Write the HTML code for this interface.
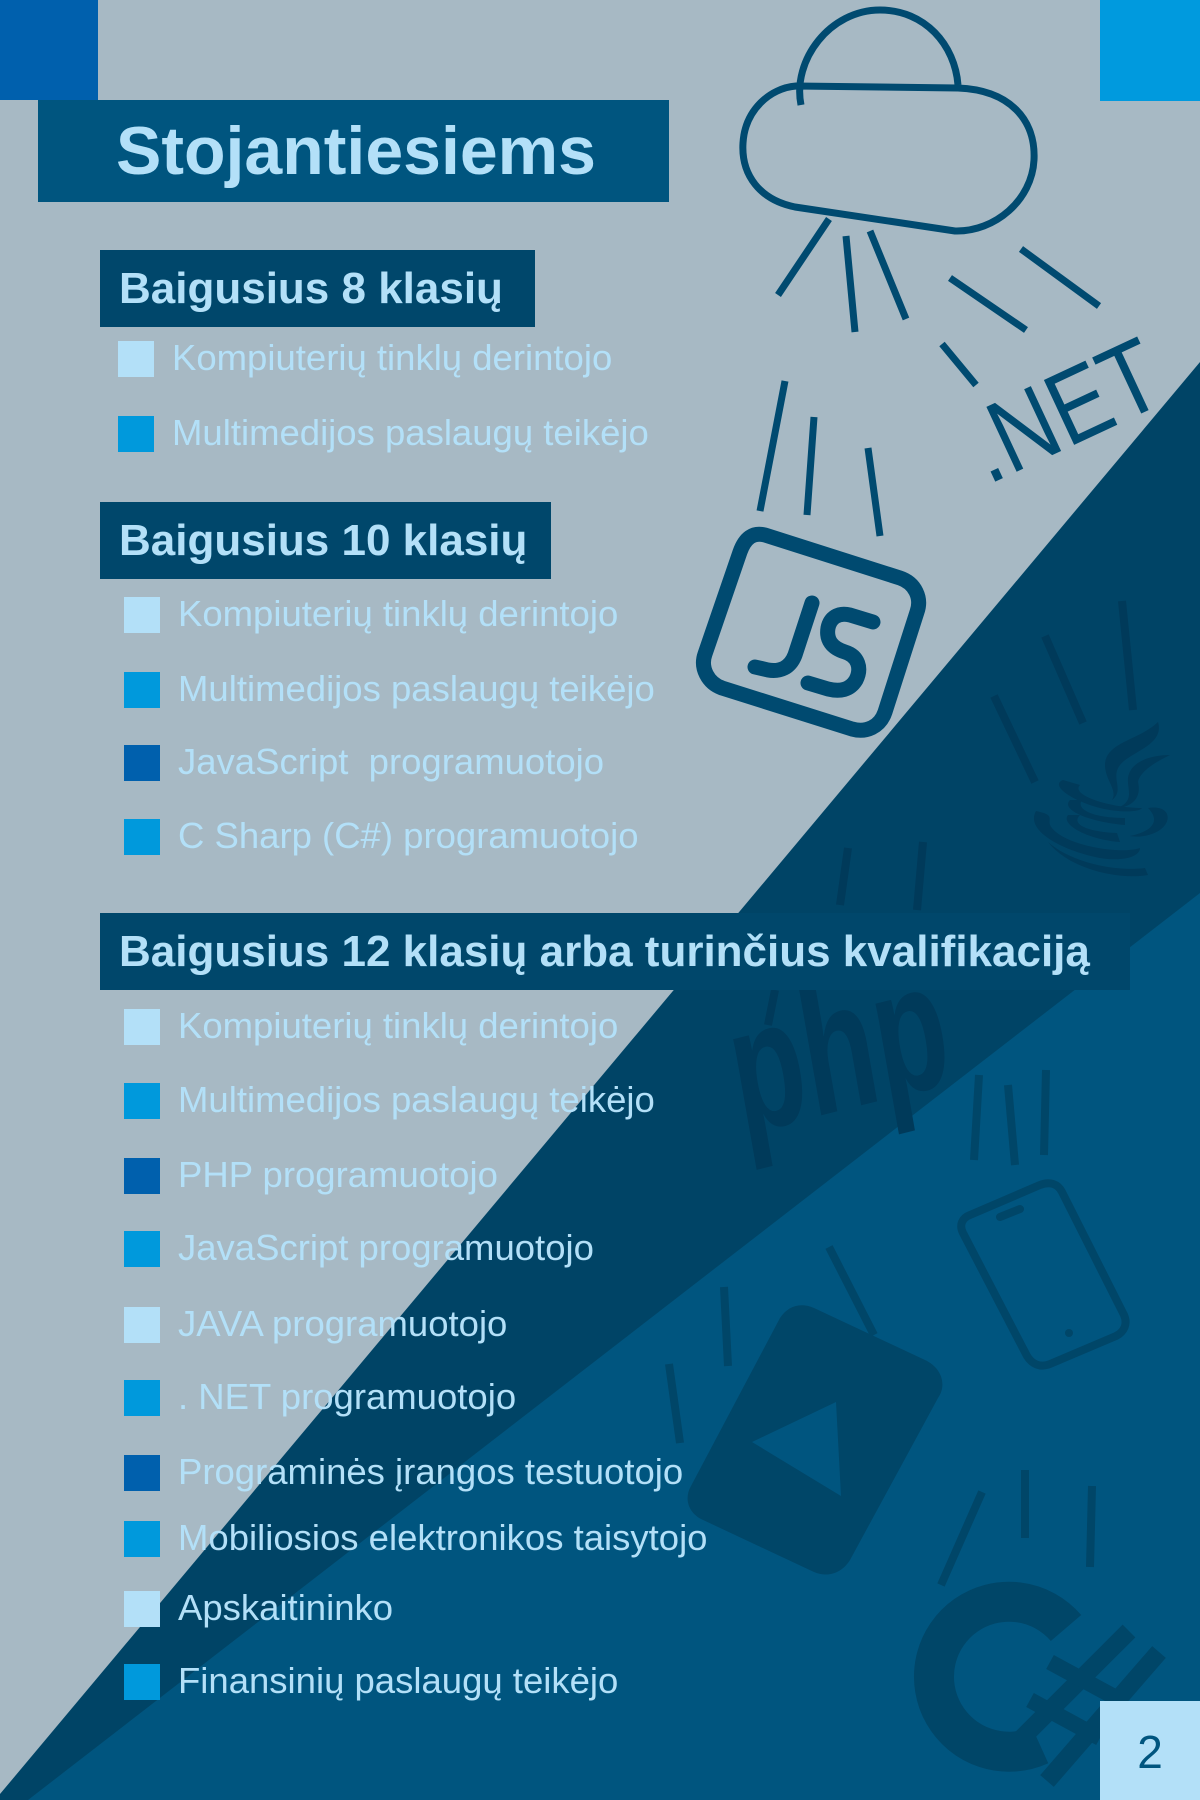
<!DOCTYPE html>
<html><head><meta charset="utf-8"><style>
*{margin:0;padding:0;box-sizing:border-box}
body{width:1200px;height:1800px;position:relative;overflow:hidden;background:#a7b9c4;font-family:"Liberation Sans",sans-serif}
.abs{position:absolute}
.title{left:38px;top:100px;width:631px;height:102px;background:#00557f;color:#b3e0f8;font-weight:bold;font-size:68px;line-height:102px;padding-left:78px}
.hdr{position:absolute;left:100px;height:77px;background:#00476b;color:#b3e0f8;font-weight:bold;font-size:44px;line-height:77px;padding-left:19px;white-space:nowrap}
.it{position:absolute;height:36px;color:#b3e0f8;font-size:36.5px;line-height:36px;white-space:nowrap}
.it i{position:absolute;left:0;top:0;width:36px;height:36px}
.it span{position:absolute;left:54px;top:-1px}
.a{background:#b3e0f8}.b{background:#0099dc}.c{background:#0060ad}
</style></head><body>
<svg class="abs" style="left:0;top:0" width="1200" height="1800" viewBox="0 0 1200 1800">
<polygon points="1200,362 1200,1800 -5,1800" fill="#004466"/>
<polygon points="1200,893 1200,1800 28,1800" fill="#00557f"/>
<rect x="0" y="0" width="98" height="100" fill="#0060ad"/>
<rect x="1100" y="0" width="100" height="101" fill="#009ade"/>
<g fill="none" stroke="#004a70" stroke-width="7" stroke-linecap="butt" stroke-linejoin="round">
<path d="M801,105 C792,60 830,10 880,10 C925,10 955,45 958,85"/>
<path d="M796,86 L958,88 C1010,90 1036,120 1034,160 C1032,200 995,232 955,231 L795,207 C760,200 741,175 743,143 C745,110 770,88 796,86 Z"/>
<path d="M829,219 L778,295 M846,236 L855,332 M870,231 L906,319 M950,278 L1026,330 M1021,249 L1099,306 M942,344 L976,385 M785,381 L760,511 M814,417 L807,515 M868,448 L880,536"/>
<path d="M765,535 L900,578 C915,583 922,598 917,612 L885,712 C880,727 866,733 852,729 L722,688 C708,683 700,668 705,654 L740,552 C745,538 753,532 765,535 Z" stroke-width="15"/>
<path d="M812,603 L795,655 C790,668 780,672 768,670 L755,667" stroke-width="15" stroke-linecap="round"/>
<path d="M873,622 L850,615 C838,612 830,618 828,628 C826,640 832,648 845,652 C858,656 862,668 856,680 C850,690 840,692 828,689 L808,683" stroke-width="15" stroke-linecap="round"/>
</g>
<text x="0" y="0" transform="translate(988,485) rotate(-25)" font-family="Liberation Sans" font-size="104" fill="#004a70" textLength="200" lengthAdjust="spacingAndGlyphs">.NET</text>
<g stroke="#003a5a" stroke-width="8" fill="none">
<path d="M994,696 L1035,782 M1045,636 L1083,723 M1122,601 L1133,710"/>
<path d="M848,848 L840,905 M923,842 L917,910"/>
<path d="M775,990 L768,1025"/>
</g>
<g fill="#003a5a">
<path d="M1158,722 C1140,740 1105,742 1105,765 C1105,780 1118,790 1112,800 C1125,790 1110,778 1120,765 C1130,752 1165,745 1158,722 Z"/>
<path d="M1170,755 C1150,755 1130,762 1128,778 C1127,790 1135,800 1118,808 C1140,805 1140,790 1138,782 C1140,770 1160,760 1170,755 Z"/>
<path d="M1063,780 C1050,785 1070,800 1100,808 C1120,813 1140,812 1142,808 C1110,808 1070,795 1080,785 Z"/>
<path d="M1070,800 C1060,810 1090,822 1125,825 L1125,818 C1095,818 1075,810 1082,800 Z"/>
<path d="M1068,815 C1060,825 1090,840 1120,842 L1117,833 C1090,832 1070,825 1080,815 Z"/>
<path d="M1148,808 C1165,805 1172,815 1165,825 C1158,835 1140,838 1130,836 C1150,832 1162,822 1148,808 Z"/>
<path d="M1036,811 C1025,830 1060,850 1100,858 C1125,862 1140,856 1140,848 C1120,855 1060,845 1050,825 C1048,818 1055,815 1036,811 Z"/>
<path d="M1048,842 C1070,870 1120,880 1148,875 L1145,868 C1115,872 1070,862 1048,842 Z"/>
</g>
<text x="0" y="0" transform="translate(742,1135) rotate(-14) skewX(-4)" font-family="Liberation Sans" font-weight="bold" font-size="180" fill="#003a5a" textLength="220" lengthAdjust="spacingAndGlyphs">php</text>
<g stroke="#004668" stroke-width="8" fill="none" stroke-linecap="butt">
<path d="M979,1075 L974,1160 M1008,1085 L1015,1165 M1046,1070 L1044,1155"/>
<path d="M970,1215 L1040,1185 C1050,1181 1058,1184 1062,1192 L1124,1315 C1128,1324 1124,1332 1116,1336 L1050,1364 C1040,1368 1032,1364 1027,1356 L963,1233 C959,1225 962,1218 970,1215 Z"/>
<path d="M1000,1217 L1020,1209" stroke-linecap="round"/>
<path d="M724,1287 L728,1366 M669,1364 L680,1443 M829,1247 L874,1335 M1025,1470 L1025,1538 M1092,1486 L1090,1567 M982,1492 L941,1585"/>
</g>
<circle cx="1069" cy="1333" r="4" fill="#004668"/>
<path fill="#004668" fill-rule="evenodd" d="M780,1318 C788,1306 800,1302 814,1308 L925,1360 C942,1368 947,1385 938,1398 L850,1560 C842,1573 828,1578 814,1572 L701,1519 C688,1512 684,1498 691,1486 Z M752,1442 L836,1402 L841,1496 Z"/>
<g fill="none" stroke="#004668">
<path d="M1066,1628 A75,75 0 1 0 1040,1745" stroke-width="40"/>
<path d="M1129,1631 L1008,1752 M1159,1652 L1047,1781" stroke-width="18"/>
<path d="M1050,1662 L1120,1700 M1030,1700 L1100,1738" stroke-width="16"/>
</g>
<rect x="1100" y="1701" width="100" height="99" fill="#b3e0f8"/>
<text x="1150" y="1768" text-anchor="middle" font-family="Liberation Sans" font-size="46" fill="#00557f">2</text>
</svg>

<div class="abs title">Stojantiesiems</div>

<div class="hdr" style="top:250px;width:435px">Baigusius 8 klasių</div>
<div class="it" style="left:118px;top:341px"><i class="a"></i><span>Kompiuterių tinklų derintojo</span></div>
<div class="it" style="left:118px;top:416px"><i class="b"></i><span>Multimedijos paslaugų teikėjo</span></div>

<div class="hdr" style="top:502px;width:451px">Baigusius 10 klasių</div>
<div class="it" style="left:124px;top:597px"><i class="a"></i><span>Kompiuterių tinklų derintojo</span></div>
<div class="it" style="left:124px;top:672px"><i class="b"></i><span>Multimedijos paslaugų teikėjo</span></div>
<div class="it" style="left:124px;top:745px"><i class="c"></i><span>JavaScript&nbsp; programuotojo</span></div>
<div class="it" style="left:124px;top:819px"><i class="b"></i><span>C Sharp (C#) programuotojo</span></div>

<div class="hdr" style="top:913px;width:1030px">Baigusius 12 klasių arba turinčius kvalifikaciją</div>
<div class="it" style="left:124px;top:1009px"><i class="a"></i><span>Kompiuterių tinklų derintojo</span></div>
<div class="it" style="left:124px;top:1083px"><i class="b"></i><span>Multimedijos paslaugų teikėjo</span></div>
<div class="it" style="left:124px;top:1158px"><i class="c"></i><span>PHP programuotojo</span></div>
<div class="it" style="left:124px;top:1231px"><i class="b"></i><span>JavaScript programuotojo</span></div>
<div class="it" style="left:124px;top:1307px"><i class="a"></i><span>JAVA programuotojo</span></div>
<div class="it" style="left:124px;top:1380px"><i class="b"></i><span>. NET programuotojo</span></div>
<div class="it" style="left:124px;top:1455px"><i class="c"></i><span>Programinės įrangos testuotojo</span></div>
<div class="it" style="left:124px;top:1521px"><i class="b"></i><span>Mobiliosios elektronikos taisytojo</span></div>
<div class="it" style="left:124px;top:1591px"><i class="a"></i><span>Apskaitininko</span></div>
<div class="it" style="left:124px;top:1664px"><i class="b"></i><span>Finansinių paslaugų teikėjo</span></div>
</body></html>
